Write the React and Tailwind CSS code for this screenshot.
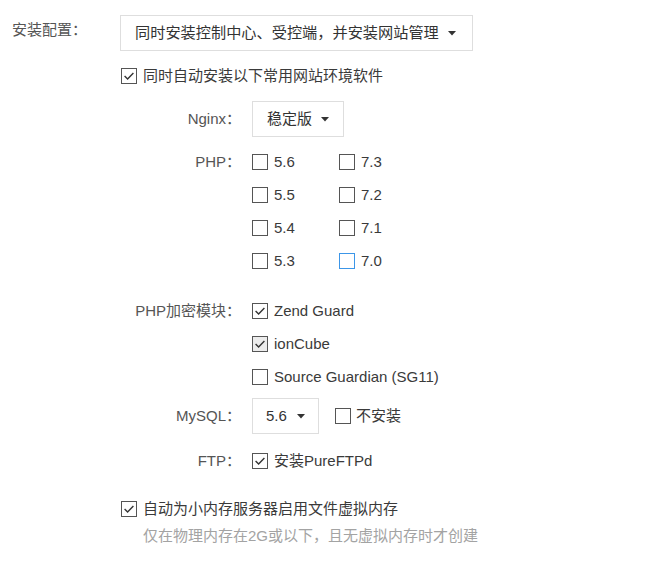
import React from "react";

const FONT = { fontFamily: '"Liberation Sans", "Noto Sans CJK SC", sans-serif' };

function Caret() {
  return (
    <svg width="8" height="5" viewBox="0 0 8 5" className="shrink-0">
      <path d="M0 0 L8 0 L4 4.5 Z" fill="#333" />
    </svg>
  );
}

function Box({ checked, blue, gray }) {
  return (
    <span
      className={
        "relative inline-block w-[16px] h-[16px] shrink-0 border " +
        (blue ? "border-[#3c96e8]" : "border-[#555]") +
        (gray ? " bg-[#ececec]" : " bg-white")
      }
    >
      {checked && (
        <svg width="14" height="14" viewBox="0 0 14 14" className="absolute left-0 top-0">
          <path d="M2.6 7 L5.6 10 L11.4 4" fill="none" stroke="#333" strokeWidth="1.4" />
        </svg>
      )}
    </span>
  );
}

function Check({ label, checked, blue, gray, gap = "gap-[6px]" }) {
  return (
    <div className={"flex items-center h-[20px] " + gap}>
      <Box checked={checked} blue={blue} gray={gray} />
      <span className="text-[15px] text-[#3a3a3a] leading-[20px] whitespace-nowrap">{label}</span>
    </div>
  );
}

function Label({ children }) {
  return (
    <div className="w-[241px] shrink-0 text-right text-[15px] text-[#555] leading-[20px] whitespace-nowrap">
      {children}
    </div>
  );
}

export default function App() {
  return (
    <div className="w-[649px] h-[565px] bg-white overflow-hidden" style={FONT}>
      <div className="pt-[15px]">
        {/* Row 1 */}
        <div className="flex">
          <div className="w-[120px] pl-[12px] pt-[5px] text-[15px] text-[#555] leading-[20px] whitespace-nowrap">
            安装配置：
          </div>
          <div className="w-[353px] h-[36px] border border-[#dedede] flex items-center justify-between pl-[14px] pr-[16px]">
            <span className="text-[15.2px] text-[#333] whitespace-nowrap">同时安装控制中心、受控端，并安装网站管理</span>
            <Caret />
          </div>
        </div>

        {/* auto install */}
        <div className="mt-[15px] pl-[121px]">
          <Check label="同时自动安装以下常用网站环境软件" checked />
        </div>

        {/* Nginx */}
        <div className="mt-[15px] flex items-center">
          <Label>Nginx：</Label>
          <div className="ml-[11px] w-[92px] h-[36px] border border-[#dedede] flex items-center justify-between pl-[14px] pr-[14px]">
            <span className="text-[15px] text-[#333]">稳定版</span>
            <Caret />
          </div>
        </div>

        {/* PHP */}
        <div className="mt-[15px] flex">
          <Label>PHP：</Label>
          <div className="ml-[11px] grid grid-cols-[87px_87px] gap-y-[13px]">
            <Check label="5.6" />
            <Check label="7.3" />
            <Check label="5.5" />
            <Check label="7.2" />
            <Check label="5.4" />
            <Check label="7.1" />
            <Check label="5.3" />
            <Check label="7.0" blue />
          </div>
        </div>

        {/* Encryption */}
        <div className="mt-[30px] flex">
          <Label>PHP加密模块：</Label>
          <div className="ml-[11px] flex flex-col gap-[13px]">
            <Check label="Zend Guard" checked />
            <Check label="ionCube" checked gray />
            <Check label="Source Guardian (SG11)" />
          </div>
        </div>

        {/* MySQL */}
        <div className="mt-[11px] flex items-center">
          <Label>MySQL：</Label>
          <div className="ml-[11px] w-[67px] h-[36px] border border-[#dedede] flex items-center justify-between pl-[13px] pr-[13px]">
            <span className="text-[15px] text-[#333]">5.6</span>
            <Caret />
          </div>
          <div className="ml-[16px]">
            <Check label="不安装" gap="gap-[5px]" />
          </div>
        </div>

        {/* FTP */}
        <div className="mt-[17px] flex">
          <Label>FTP：</Label>
          <div className="ml-[11px]">
            <Check label="安装PureFTPd" checked />
          </div>
        </div>

        {/* Swap */}
        <div className="mt-[28px] pl-[121px]">
          <Check label="自动为小内存服务器启用文件虚拟内存" checked />
          <div className="mt-[7px] pl-[22px] text-[15px] text-[#a3a3a3] leading-[20px] whitespace-nowrap">
            仅在物理内存在2G或以下，且无虚拟内存时才创建
          </div>
        </div>
      </div>
    </div>
  );
}
